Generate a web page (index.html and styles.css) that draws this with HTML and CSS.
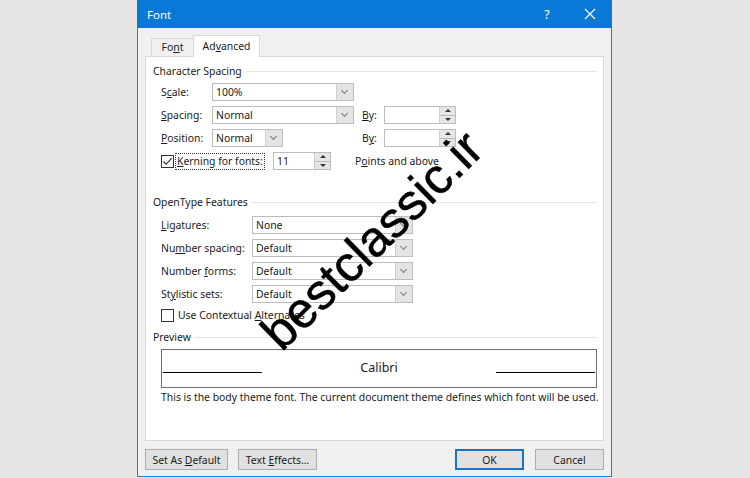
FILE: index.html
```html
<!DOCTYPE html>
<html lang="en">
<head>
    <meta charset="UTF-8">
    <meta name="viewport" content="width=device-width, initial-scale=1.0">
    <title>Font</title>
    <link rel="stylesheet" href="styles.css">
</head>
<body>
    <div class="dialog">
        <div class="titlebar">
            <span class="title">Font</span>
            <span class="help">?</span>
            <span class="close">
                <svg width="12" height="12" viewBox="0 0 12 12"><path d="M1 1L11 11M11 1L1 11" stroke="#fff" stroke-width="1.2" fill="none"/></svg>
            </span>
        </div>

        <div class="tabs">
            <div class="tab">Fo<u>n</u>t</div>
            <div class="tab active">Ad<u>v</u>anced</div>
        </div>

        <div class="panel">
            <div class="group-title">Character Spacing</div>
            <div class="spacing-grid">
                <span class="lbl">S<u>c</u>ale:</span>
                <div class="combo combo-wide"><span class="val">100%</span><i class="drop"></i></div>
                <span></span><span></span>

                <span class="lbl"><u>S</u>pacing:</span>
                <div class="combo combo-wide"><span class="val">Normal</span><i class="drop"></i></div>
                <span class="lbl"><u>B</u>y:</span>
                <div class="spin spin-by"><span class="val"></span><i class="arrows"><b class="up"></b><b class="down"></b></i></div>

                <span class="lbl"><u>P</u>osition:</span>
                <div class="combo combo-short"><span class="val">Normal</span><i class="drop"></i></div>
                <span class="lbl">B<u>y</u>:</span>
                <div class="spin spin-by"><span class="val"></span><i class="arrows"><b class="up"></b><b class="down"></b></i></div>

                <div class="kerning-row">
                    <span class="check checked">
                        <svg width="11" height="11" viewBox="0 0 11 11"><path d="M1.5 5.5L4.2 8.3L9.6 2.2" stroke="#222" stroke-width="1.1" fill="none"/></svg>
                    </span>
                    <span class="focus-label"><u>K</u>erning for fonts:</span>
                    <div class="spin spin-kern"><span class="val">11</span><i class="arrows"><b class="up"></b><b class="down"></b></i></div>
                    <span class="lbl points">P<u>o</u>ints and above</span>
                </div>
            </div>

            <div class="group-title gap-big">OpenType Features</div>
            <div class="opentype-grid">
                <span class="lbl"><u>L</u>igatures:</span>
                <div class="combo"><span class="val">None</span><i class="drop"></i></div>

                <span class="lbl">Nu<u>m</u>ber spacing:</span>
                <div class="combo"><span class="val">Default</span><i class="drop"></i></div>

                <span class="lbl">Number <u>f</u>orms:</span>
                <div class="combo"><span class="val">Default</span><i class="drop"></i></div>

                <span class="lbl">St<u>y</u>listic sets:</span>
                <div class="combo"><span class="val">Default</span><i class="drop"></i></div>
            </div>
            <div class="check-row">
                <span class="check"></span>
                <span class="lbl">Use Contextual <u>A</u>lternates</span>
            </div>

            <div class="group-title gap-small">Preview</div>
            <div class="preview">
                <span class="rule"></span>
                <span class="sample">Calibri</span>
                <span class="rule"></span>
            </div>
            <div class="preview-note">This is the body theme font. The current document theme defines which font will be used.</div>
        </div>

        <div class="footer">
            <button class="btn btn-default">Set As <u>D</u>efault</button>
            <button class="btn btn-effects">Text <u>E</u>ffects...</button>
            <span class="spacer"></span>
            <button class="btn btn-ok">OK</button>
            <button class="btn btn-cancel">Cancel</button>
        </div>

        <div class="watermark">bestclassic.ir</div>
    </div>
</body>
</html>
```

FILE: styles.css
```css
body {
    margin: 0;
    height: 478px;
    padding-left: 137px;
    background-color: #e8e6e4;
    font-family: 'Noto Sans', 'Open Sans', sans-serif;
    font-size: 10.4px;
    color: #1a1a1a;
    overflow: hidden;
}

u {
    text-underline-offset: 1px;
}

.dialog {
    position: relative;
    width: 473px;
    height: 476px;
    background-color: #f0f0f0;
    border: 1px solid #1c7fd2;
    border-top: none;
    display: flex;
    flex-direction: column;
}

.titlebar {
    height: 28px;
    background-color: #0a78d6;
    color: #fff;
    display: flex;
    align-items: center;
    font-size: 11.5px;
    margin: 0 -1px;
}

.title {
    flex: 1;
    padding-left: 10px;
}

.help {
    width: 40px;
    text-align: center;
    font-size: 12.5px;
}

.close {
    width: 45px;
    display: flex;
    justify-content: center;
    align-items: center;
}

.tabs {
    height: 28px;
    display: flex;
    align-items: flex-end;
    padding-left: 13px;
    position: relative;
    z-index: 1;
}

.tab {
    height: 18px;
    line-height: 17px;
    padding: 0 6px;
    width: 43px;
    box-sizing: border-box;
    text-align: center;
    border: 1px solid #d9d9d9;
    border-bottom: none;
    background-color: #f0f0f0;
}

.tab.active {
    width: 67px;
    height: 22px;
    line-height: 20px;
    background-color: #fff;
    margin-bottom: -1px;
    margin-left: -1px;
}

.panel {
    flex: 1;
    margin: 0 7px;
    background-color: #fff;
    border: 1px solid #d9d9d9;
    padding: 6px 6px 0 7px;
}

.group-title {
    height: 16px;
    display: flex;
    align-items: center;
    gap: 4px;
    white-space: nowrap;
}

.group-title::after {
    content: "";
    flex: 1;
    height: 1px;
    background-color: #e3e3e3;
    margin-top: 1px;
}

.gap-big {
    margin-top: 24px;
}

.gap-small {
    margin-top: 7px;
}

.lbl {
    white-space: nowrap;
    line-height: 16px;
}

.spacing-grid {
    display: grid;
    grid-template-columns: 51px 150px 22px 72px;
    grid-auto-rows: 18px;
    row-gap: 5px;
    align-items: center;
    margin: 4px 0 0 8px;
}

.opentype-grid {
    display: grid;
    grid-template-columns: 91px 161px;
    grid-auto-rows: 18px;
    row-gap: 5px;
    align-items: center;
    margin: 6px 0 0 8px;
}

.combo, .spin {
    height: 18px;
    box-sizing: border-box;
    border: 1px solid #bdbdbd;
    background-color: #fff;
    display: flex;
    align-items: stretch;
}

.combo-wide {
    width: 142px;
}

.combo-short {
    width: 71px;
}

.val {
    flex: 1;
    padding-left: 3px;
    line-height: 16px;
}

.drop {
    width: 16px;
    background-color: #e4e4e4;
    border-left: 1px solid #d0d0d0;
    position: relative;
}

.drop::after {
    content: "";
    position: absolute;
    left: 5px;
    top: 4px;
    width: 4px;
    height: 4px;
    border-right: 1px solid #7a7a7a;
    border-bottom: 1px solid #7a7a7a;
    transform: rotate(45deg);
}

.spin-by {
    width: 72px;
}

.spin-kern {
    width: 58px;
}

.arrows {
    width: 15px;
    background-color: #e6e6e6;
    border-left: 1px solid #d0d0d0;
    display: flex;
    flex-direction: column;
}

.arrows b {
    flex: 1;
    display: flex;
    justify-content: center;
    align-items: center;
}

.arrows .up {
    border-bottom: 1px solid #bcbcbc;
}

.arrows .up::after {
    content: "";
    border-left: 3px solid transparent;
    border-right: 3px solid transparent;
    border-bottom: 3px solid #333;
}

.arrows .down::after {
    content: "";
    border-left: 3px solid transparent;
    border-right: 3px solid transparent;
    border-top: 3px solid #333;
}

.kerning-row {
    grid-column: 1 / -1;
    display: flex;
    align-items: center;
    height: 18px;
}

.check {
    width: 13px;
    height: 13px;
    box-sizing: border-box;
    border: 1px solid #333;
    background-color: #fff;
    display: flex;
    justify-content: center;
    align-items: center;
}

.focus-label {
    margin-left: 1px;
    width: 90px;
    height: 17px;
    box-sizing: border-box;
    border: 1px dotted #333;
    padding-left: 1px;
    line-height: 15px;
    white-space: nowrap;
}

.spin-kern {
    margin-left: 8px;
}

.points {
    margin-left: 24px;
}

.check-row {
    display: flex;
    align-items: center;
    gap: 4px;
    height: 14px;
    margin: 5px 0 0 8px;
}

.preview {
    margin: 4px 0 0 8px;
    width: 436px;
    height: 39px;
    box-sizing: border-box;
    border: 1px solid #707070;
    display: flex;
    align-items: center;
    padding: 0 1px;
}

.rule {
    width: 99px;
    height: 1px;
    background-color: #000;
    margin-top: 8px;
}

.sample {
    flex: 1;
    text-align: center;
    font-size: 12.5px;
    color: #222;
    margin-top: -3px;
}

.preview-note {
    margin: 1px 0 0 8px;
    line-height: 16px;
    white-space: nowrap;
}

.footer {
    display: flex;
    padding: 8px 7px 6px;
    gap: 10px;
}

.spacer {
    flex: 1;
}

.btn {
    height: 21px;
    box-sizing: border-box;
    border: 1px solid #adadad;
    background-color: #e1e1e1;
    font-family: inherit;
    font-size: 10.4px;
    color: #1a1a1a;
    padding: 0;
}

.btn-default {
    width: 83px;
}

.btn-effects {
    width: 79px;
}

.btn-ok {
    width: 69px;
    border: 2px solid #1a74c4;
    margin-right: 1px;
}

.btn-cancel {
    width: 69px;
}

.watermark {
    position: absolute;
    left: 234px;
    top: 240px;
    transform: translate(-50%, -50%) rotate(-44.5deg);
    font-family: 'Liberation Sans', Arial, sans-serif;
    font-size: 50px;
    line-height: 1;
    color: #000;
    white-space: nowrap;
    z-index: 5;
    -webkit-text-stroke: 0.6px #000;
}
```
